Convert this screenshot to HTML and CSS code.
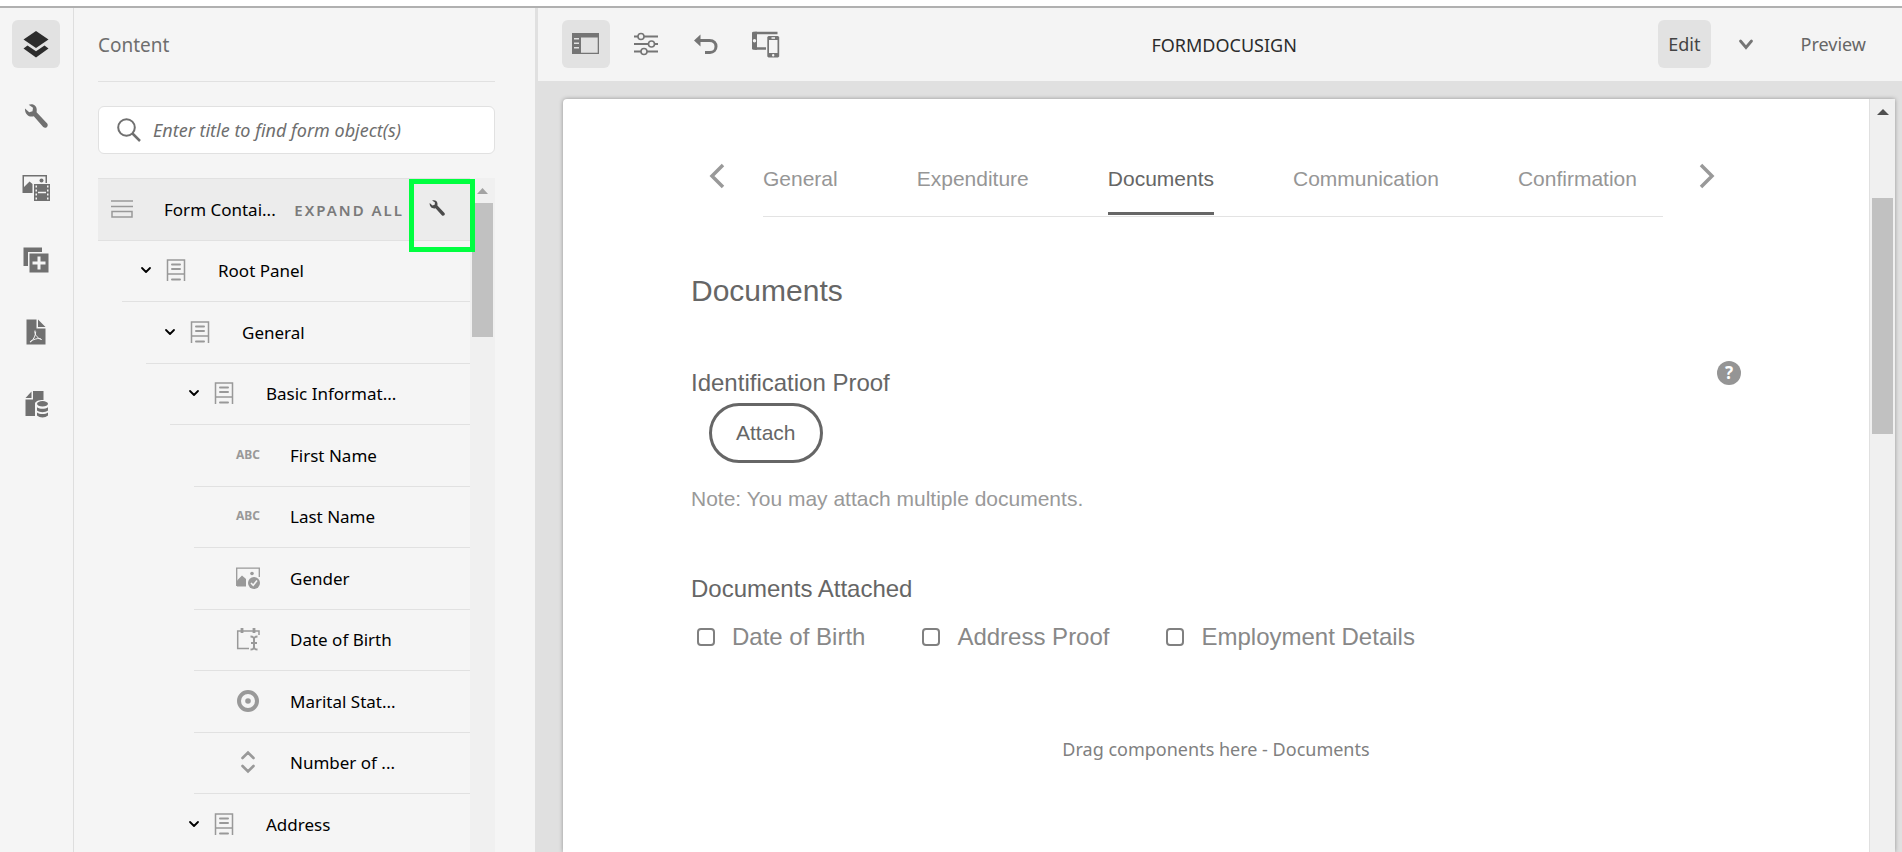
FILE: index.html
```html
<!DOCTYPE html>
<html lang="en">
<head>
<meta charset="utf-8">
<title>FORMDOCUSIGN</title>
<link rel="stylesheet" href="styles.css">
</head>
<body>
<svg class="defs" aria-hidden="true">
  <symbol id="wrench" viewBox="0 0 24 24"><path d="M1 4.500L5.200 8.200L8.500 7.200L9 3.700L4.700 .8C8-.6 12.300.8 12.700 5.200C12.800 6.500 12.600 7.400 12.600 8.200L23.200 19.500C25 22.200 21.800 25.200 19.200 23L9.800 12.300C5 13.800.6 9.800 1 4.500Z"/></symbol>
  <symbol id="panel" viewBox="0 0 20 24"><path d="M1.500 23V2H18.500V23M1.500 16H18.500" fill="none" stroke="currentColor" stroke-width="1.500"/><path d="M6 6.500H14M6 11H14M6 21.500H14" stroke="currentColor" stroke-width="2" stroke-linecap="round"/></symbol>
  <symbol id="chev" viewBox="0 0 12 12"><path d="M2 4L6 8L10 4" fill="none" stroke="currentColor" stroke-width="1.800" stroke-linecap="round" stroke-linejoin="round"/></symbol>
</svg>
<div class="app">
  <nav class="rail" aria-label="Side panel">
    <button class="tool on" aria-label="Content"><svg width="26" height="28" viewBox="0 0 26 28"><path d="M13 1L25.500 9.500L13 18L.5 9.500Z"/><path d="M4.500 15.500L13 21.300L21.500 15.500L25.500 18.500L13 27.500L.5 18.500Z"/></svg></button>
    <button class="tool" aria-label="Properties"><svg width="24" height="24"><use href="#wrench"/></svg></button>
    <button class="tool" aria-label="Assets"><svg width="28" height="28" viewBox="0 0 28 28"><path fill-rule="evenodd" d="M.5 1H25V9H23.500V2.500H2V13L7.500 7.500L10.500 10V19H.5Z"/><circle cx="19.500" cy="6.500" r="2"/><path fill-rule="evenodd" d="M12 10H28V27H12ZM13.500 11.500V13.500H15V11.500ZM13.500 15.500V17.500H15V15.500ZM13.500 19.500V21.500H15V19.500ZM13.500 23.500V25.500H15V23.500ZM25 11.500V13.500H26.500V11.500ZM25 15.500V17.500H26.500V15.500ZM25 19.500V21.500H26.500V19.500ZM25 23.500V25.500H26.500V23.500ZM16 17.800V19.200H24V17.800Z"/></svg></button>
    <button class="tool" aria-label="Components"><svg width="26" height="26" viewBox="0 0 26 26"><path d="M.5 .5H19V5H5V19H.5Z"/><path fill-rule="evenodd" d="M6.500 6.500H25.500V25.500H6.500ZM14.500 9.500V14.500H9.500V17.500H14.500V22.500H17.500V17.500H22.500V14.500H17.500V9.500Z"/></svg></button>
    <button class="tool" aria-label="Data sources"><svg width="20" height="26" viewBox="0 0 20 26"><path d="M.5 .5H10.500V9.500H19.500V25.500H.5Z"/><path d="M12 .5L19.500 8H12Z"/><path d="M9 11.500C8 14 10.500 19 15.500 20.500C13 18 6 21 4 22.800C3.500 24 9.500 20 9.700 12.500" fill="none" stroke="#f5f5f5" stroke-width="1"/></svg></button>
    <button class="tool" aria-label="Data model"><svg width="26" height="28" viewBox="0 0 26 28"><path d="M10 1H20.500V10C15 10 12 11.500 12 14V26H2.500V9.500H10Z"/><path d="M2.500 8L8.500 1.500V8Z"/><ellipse cx="19.500" cy="13.800" rx="5.500" ry="2.700"/><path d="M14 17.300C17 19.300 22 19.300 25 17.300V20.500C22 22.800 17 22.800 14 20.500ZM14 22.600C17 24.600 22 24.600 25 22.600V25.500C22 28 17 28 14 25.500Z"/></svg></button>
  </nav>

  <aside class="side">
    <h2 class="side-title">Content</h2>
    <label class="search">
      <svg width="26" height="26" viewBox="0 0 26 26"><circle cx="11.500" cy="10.500" r="8.300" fill="none" stroke="currentColor" stroke-width="2"/><path d="M17.500 16.500L25 24" stroke="currentColor" stroke-width="2.500"/></svg>
      <input type="text" placeholder="Enter title to find form object(s)" aria-label="Find form object">
    </label>
    <div class="tree-wrap">
      <ul class="tree">
        <li class="row root"><span class="glyph"><svg width="22" height="20" viewBox="0 0 22 20"><path d="M0 2H22M0 7.500H22M1 12.500H21V18H1Z" fill="none" stroke="currentColor" stroke-width="1.500"/></svg></span><span>Form Contai...</span><button class="expand">EXPAND ALL</button><button class="configure" aria-label="Configure"><svg width="16" height="16"><use href="#wrench"/></svg></button></li>
        <li class="row l1"><button class="twist" aria-label="Collapse"><svg width="12" height="12"><use href="#chev"/></svg></button><span class="glyph"><svg width="20" height="24"><use href="#panel"/></svg></span><span>Root Panel</span></li>
        <li class="row l2"><button class="twist" aria-label="Collapse"><svg width="12" height="12"><use href="#chev"/></svg></button><span class="glyph"><svg width="20" height="24"><use href="#panel"/></svg></span><span>General</span></li>
        <li class="row l3"><button class="twist" aria-label="Collapse"><svg width="12" height="12"><use href="#chev"/></svg></button><span class="glyph"><svg width="20" height="24"><use href="#panel"/></svg></span><span>Basic Informat...</span></li>
        <li class="row l4"><span class="twist"></span><span class="glyph abc">ABC</span><span>First Name</span></li>
        <li class="row l4"><span class="twist"></span><span class="glyph abc">ABC</span><span>Last Name</span></li>
        <li class="row l4"><span class="twist"></span><span class="glyph"><svg width="24" height="22" viewBox="0 0 24 22"><path d="M.7 19V1.200H23.300V10" fill="none" stroke="currentColor" stroke-width="1.300"/><path d="M1 19.500V13.500L6 8.500L10 12V19.500Z"/><circle cx="16" cy="6.500" r="1.800"/><circle cx="18" cy="16" r="6"/><path d="M15 16L17.200 18.300L21 13.500" fill="none" stroke="#f5f5f5" stroke-width="1.600"/></svg></span><span>Gender</span></li>
        <li class="row l4"><span class="twist"></span><span class="glyph"><svg width="24" height="24" viewBox="0 0 24 24"><path d="M13 21.500H1.700V4H23V8" fill="none" stroke="currentColor" stroke-width="1.500"/><path d="M6 1V6M18 1V6" stroke="currentColor" stroke-width="2.800"/><path d="M14.500 9.500C18 9.500 18 11 18 13V19C18 21 18 22.500 14.500 22.500M21.500 9.500C18 9.500 18 11 18 13V19C18 21 18 22.500 21.500 22.500M15 16H21" fill="none" stroke="currentColor" stroke-width="2"/></svg></span><span>Date of Birth</span></li>
        <li class="row l4"><span class="twist"></span><span class="glyph"><svg width="22" height="22" viewBox="0 0 22 22"><circle cx="11" cy="11" r="9" fill="none" stroke="currentColor" stroke-width="4"/><circle cx="11" cy="11" r="2.800"/></svg></span><span>Marital Stat...</span></li>
        <li class="row l4"><span class="twist"></span><span class="glyph"><svg width="16" height="24" viewBox="0 0 16 24"><path d="M2.500 8L8 2.500L13.500 8M2.500 16L8 21.500L13.500 16" fill="none" stroke="currentColor" stroke-width="2.600" stroke-linecap="round"/></svg></span><span>Number of ...</span></li>
        <li class="row l3"><button class="twist" aria-label="Collapse"><svg width="12" height="12"><use href="#chev"/></svg></button><span class="glyph"><svg width="20" height="24"><use href="#panel"/></svg></span><span>Address</span></li>
      </ul>
      <div class="bar tree-bar"><svg width="11" height="6" viewBox="0 0 11 6"><path d="M0 6L5.500 0L11 6Z"/></svg><div class="thumb"></div></div>
      <div class="highlight"></div>
    </div>
  </aside>

  <main class="main">
    <header class="toolbar">
      <div class="tools">
        <button class="tool on" aria-label="Toggle side panel"><svg width="28" height="22" viewBox="0 0 28 22"><path fill-rule="evenodd" d="M0 0H27V21H0ZM9 4.500V19.700H25.700V4.500ZM2 5V6.500H7V5ZM2 9.500V11H7V9.500ZM2 14V15.500H7V14Z"/></svg></button>
        <button class="tool" aria-label="Page information"><svg width="26" height="24" viewBox="0 0 26 24"><path d="M1 4.500H5M11 4.500H25M1 12H15M21 12H25M1 19.500H8M14 19.500H25" stroke="currentColor" stroke-width="2"/><g fill="none" stroke="currentColor" stroke-width="1.600"><circle cx="8" cy="4.500" r="3"/><circle cx="18.500" cy="12" r="3"/><circle cx="11" cy="19.500" r="3"/></g></svg></button>
        <button class="tool" aria-label="Undo"><svg width="24" height="22" viewBox="0 0 24 22"><path d="M5 7.500H15.500C20 7.500 22 10.500 22 13.500C22 17 19.500 19.500 16 19.500H11" fill="none" stroke="currentColor" stroke-width="3"/><path d="M0 7.500L6.500 1.500V13.500Z"/></svg></button>
        <button class="tool" aria-label="Emulator"><svg width="28" height="28" viewBox="0 0 28 28"><path d="M2.500 3H25.500M2.500 18.500H14" stroke="currentColor" stroke-width="2.500"/><path fill-rule="evenodd" d="M0 2.500L1 1.700H5V19.700H1L0 18.900ZM2.500 9A1.700 1.700 0 1 0 2.500 12.400A1.700 1.700 0 1 0 2.500 9Z"/><path fill-rule="evenodd" d="M16.500 6H26L27.200 7V26.500L26 27.500H16.500L15.300 26.500V7ZM17 10V23H25.500V10ZM19.500 7.300V8.700H23V7.300ZM21.200 24A1.200 1.200 0 1 0 21.200 26.400A1.200 1.200 0 1 0 21.200 24Z"/></svg></button>
      </div>
      <h1 class="title">FORMDOCUSIGN</h1>
      <div class="modes">
        <button class="mode on">Edit</button>
        <button class="more" aria-label="More modes"><svg width="16" height="14" viewBox="0 0 16 14"><path d="M2.500 3L8 9.500L13.500 3" fill="none" stroke="currentColor" stroke-width="2.800" stroke-linecap="round"/></svg></button>
        <button class="mode">Preview</button>
      </div>
    </header>
    <div class="canvas">
      <div class="page">
        <form class="form">
          <div class="wizard">
            <button type="button" class="prev" aria-label="Previous"><svg width="16" height="26" viewBox="0 0 16 26"><path d="M14 2L3 13L14 24" fill="none" stroke="currentColor" stroke-width="3.500"/></svg></button>
            <nav class="tabs"><a href="#general">General</a><a href="#expenditure">Expenditure</a><a href="#documents" class="current">Documents</a><a href="#communication">Communication</a><a href="#confirmation">Confirmation</a></nav>
            <button type="button" class="next" aria-label="Next"><svg width="16" height="26" viewBox="0 0 16 26"><path d="M2 2L13 13L2 24" fill="none" stroke="currentColor" stroke-width="3.500"/></svg></button>
          </div>
          <h2 class="heading">Documents</h2>
          <div class="field-head">
            <h3 class="field">Identification Proof</h3>
            <button type="button" class="help" aria-label="Help">?</button>
          </div>
          <button type="button" class="attach">Attach</button>
          <p class="note">Note: You may attach multiple documents.</p>
          <fieldset class="checks">
            <legend class="field">Documents Attached</legend>
            <div class="options">
              <label><input type="checkbox">Date of Birth</label>
              <label><input type="checkbox">Address Proof</label>
              <label><input type="checkbox">Employment Details</label>
            </div>
          </fieldset>
          <p class="drop">Drag components here - Documents</p>
        </form>
        <div class="bar page-bar"><svg width="12" height="6" viewBox="0 0 12 6"><path d="M0 6L6 0L12 6Z"/></svg><div class="thumb"></div></div>
      </div>
    </div>
  </main>
</div>
</body>
</html>
```
FILE: styles.css
```css
* { box-sizing: border-box; margin: 0; padding: 0; }
body { background: #fff; padding-top: 6px; font: 18px/24px "Noto Sans", "Open Sans", sans-serif; color: #707070; }
button { border: 0; background: none; font: inherit; color: inherit; cursor: pointer; }
svg { display: block; fill: currentColor; }
.defs { position: absolute; width: 0; height: 0; }
.app { display: flex; height: calc(100vh - 6px); border-top: 2px solid #b0b0b0; background: #f5f5f5; overflow: hidden; }

.rail { flex: none; width: 74px; padding: 12px 0 0 12px; display: flex; flex-direction: column; gap: 24px; border-right: 1px solid #dedede; }
.tool { width: 48px; height: 48px; border-radius: 6px; display: flex; align-items: center; justify-content: center; }
.tool.on { background: #e2e2e2; }
.rail .tool.on { color: #2c2c2c; }

.side { flex: none; width: 461px; padding: 0 40px 0 24px; display: flex; flex-direction: column; }
.side-title { height: 74px; padding-top: 25px; border-bottom: 1px solid #e1e1e1; font-size: 19px; font-weight: 400; color: #6e6e6e; }
.search { flex: none; height: 48px; margin: 24px 0; padding: 0 16px; display: flex; align-items: center; gap: 12px; border: 1px solid #e1e1e1; border-radius: 6px; background: #fff; }
.search input { flex: 1; min-width: 0; border: 0; outline: 0; background: none; font: italic 18px/24px "Noto Sans", "Open Sans", sans-serif; }
.search input::placeholder { color: #6e6e6e; opacity: 1; }

.tree-wrap { position: relative; flex: 1; min-height: 0; display: flex; }
.tree { flex: 1; height: 100%; overflow: hidden; list-style: none; border-top: 1px solid #e1e1e1; color: #000; font-size: 17px; }
.row { display: flex; align-items: center; height: 62px; border-bottom: 1px solid #e1e1e1; white-space: nowrap; }
.row:nth-child(even) { height: 61px; }
.root { background: #ececec; }
.l1 { margin-left: 24px; }
.l2 { margin-left: 48px; }
.l3 { margin-left: 72px; }
.l4 { margin-left: 96px; }
.twist { width: 20px; height: 24px; margin-left: 14px; padding-bottom: 2px; display: flex; align-items: center; justify-content: center; }
.glyph { width: 40px; margin-right: 22px; padding-bottom: 2px; display: flex; justify-content: center; color: #999; }
.root .glyph { width: 48px; margin-right: 18px; }
.abc { font-size: 12px; font-weight: 700; }
.expand { margin-left: auto; font-size: 15px; font-weight: 600; letter-spacing: 2px; color: #7a7a7a; }
.configure { width: 66px; padding-bottom: 4px; display: flex; justify-content: center; color: #4b4b4b; }
.highlight { position: absolute; top: 1px; right: 20px; width: 66px; height: 73px; border: 5px solid #00ff40; }

.bar { flex: none; background: #f0f0f0; display: flex; flex-direction: column; align-items: center; }
.tree-bar { width: 25px; padding-top: 10px; gap: 9px; color: #a3a3a3; }
.page-bar { width: 26px; padding-top: 10px; gap: 83px; color: #505050; border-left: 1px solid #e0e0e0; }
.thumb { width: 21px; background: #c1c1c1; }
.tree-bar .thumb { height: 134px; }
.page-bar .thumb { height: 236px; }

.main { flex: 1; min-width: 0; display: flex; flex-direction: column; border-left: 3px solid #e0e0e0; background: #e0e0e0; }
.toolbar { flex: none; height: 73px; padding: 12px 26px 12px 24px; display: flex; justify-content: space-between; background: #f4f4f4; }
.tools { display: flex; gap: 12px; color: #757575; }
.title { line-height: 50px; font-size: 18px; font-weight: 400; color: #2c2c2c; }
.modes { display: flex; }
.mode { height: 48px; padding: 0 10px; border-radius: 6px; color: #666; }
.mode.on { background: #e2e2e2; color: #444; }
.more { width: 80px; padding-right: 10px; display: flex; align-items: center; justify-content: center; color: #757575; }

.canvas { flex: 1; min-height: 0; padding: 18px 7px 0 25px; }
.page { height: 100%; display: flex; background: #fff; border-radius: 4px 0 0 0; overflow: hidden; box-shadow: 0 0 4px rgba(0, 0, 0, .35); }
.form { flex: 1; padding: 56px 128px 0; overflow: hidden; font-family: "Liberation Sans", Arial, sans-serif; }
.wizard { display: flex; align-items: flex-start; gap: 20px; padding-right: 10px; color: #999; }
.prev, .next { flex: none; display: flex; justify-content: center; padding-top: 8px; }
.prev { width: 52px; }
.next { width: 48px; }
.tabs { flex: 1; display: flex; gap: 79px; border-bottom: 1px solid #e3e3e3; font-size: 21px; }
.tabs a { padding: 12px 0 21px; border-bottom: 3px solid transparent; margin-bottom: 1px; color: #969696; text-decoration: none; }
.tabs a.current { color: #666; border-color: #666; }
.heading { margin-top: 56px; font-size: 30px; line-height: 36px; font-weight: 400; color: #666; }
.field-head { margin-top: 52px; display: flex; justify-content: space-between; align-items: flex-start; }
.field { font-size: 24px; line-height: 28px; font-weight: 400; color: #666; }
.field-head .field { padding-top: 8px; }
.help { width: 24px; height: 24px; border-radius: 12px; background: #959595; color: #fff; font: 700 17px/24px "Noto Sans", sans-serif; }
.attach { display: block; height: 60px; margin: 6px 0 0 18px; padding: 0 24px; border: 3px solid #666; border-radius: 30px; font-size: 21px; color: #666; }
.note { margin-top: 24px; font-size: 21px; line-height: 24px; color: #999; }
.checks { margin-top: 64px; border: 0; }
.options { display: flex; gap: 57px; margin-top: 20px; padding-left: 6px; }
.options label { display: flex; align-items: center; gap: 17px; font-size: 24px; line-height: 28px; color: #888; }
.options input { appearance: none; width: 18px; height: 18px; border: 2px solid #808080; border-radius: 4px; background: #fff; }
.drop { margin-top: 86px; text-align: center; font: 18px/24px "Noto Sans", "Open Sans", sans-serif; color: #808080; }
```
